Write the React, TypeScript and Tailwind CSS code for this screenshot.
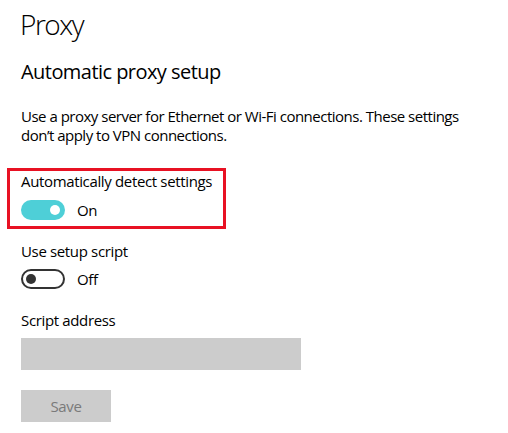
import React from "react";

function ToggleOn() {
  return (
    <div className="flex items-center">
      <div className="w-[44px] h-[20px] rounded-full bg-[#4ecfd7] flex items-center justify-end pr-[5px]">
        <div className="w-[10px] h-[10px] rounded-full bg-white" />
      </div>
      <span className="ml-[12px] text-[15px] leading-[20px] tracking-[-0.35px]">On</span>
    </div>
  );
}

function ToggleOff() {
  return (
    <div className="flex items-center">
      <div className="w-[44px] h-[20px] rounded-full border-2 border-[#333333] flex items-center pl-[3px]">
        <div className="w-[10px] h-[10px] rounded-full bg-[#333333]" />
      </div>
      <span className="ml-[12px] text-[15px] leading-[20px] tracking-[-0.35px]">Off</span>
    </div>
  );
}

export default function App() {
  return (
    <div
      className="w-[508px] h-[433px] bg-white text-black pl-[21px] pt-[4px] overflow-hidden"
      style={{ fontFamily: '"Open Sans", "Noto Sans", sans-serif' }}
    >
      <h1 className="text-[28px] leading-[40px] font-light tracking-[-1.5px] -ml-[1px]">Proxy</h1>
      <h2 className="mt-[14px] text-[20px] leading-[28px] font-normal tracking-[-0.55px]">Automatic proxy setup</h2>
      <p className="mt-[21px] text-[15px] leading-[19px] w-[470px] tracking-[-0.5px]">
        Use a proxy server for Ethernet or Wi-Fi connections. These settings don’t apply to VPN connections.
      </p>
      <div className="mt-[23px] -ml-[14px] w-[219px] border-[3px] border-[#e81123] pl-[11px] pb-[6px]">
        <div className="text-[15px] leading-[20px] tracking-[-0.35px]">Automatically detect settings</div>
        <div className="mt-[9px]">
          <ToggleOn />
        </div>
      </div>
      <div className="mt-[12px] text-[15px] leading-[20px] tracking-[-0.35px]">Use setup script</div>
      <div className="mt-[8px]">
        <ToggleOff />
      </div>
      <div className="mt-[21px] text-[15px] leading-[20px] tracking-[-0.35px]">Script address</div>
      <div className="mt-[8px] w-[280px] h-[32px] bg-[#cccccc]" />
      <button className="mt-[20px] w-[90px] h-[32px] bg-[#cccccc] text-[#7a7a7a] text-[15px] leading-[32px] text-center block tracking-[-0.35px]">
        Save
      </button>
    </div>
  );
}
